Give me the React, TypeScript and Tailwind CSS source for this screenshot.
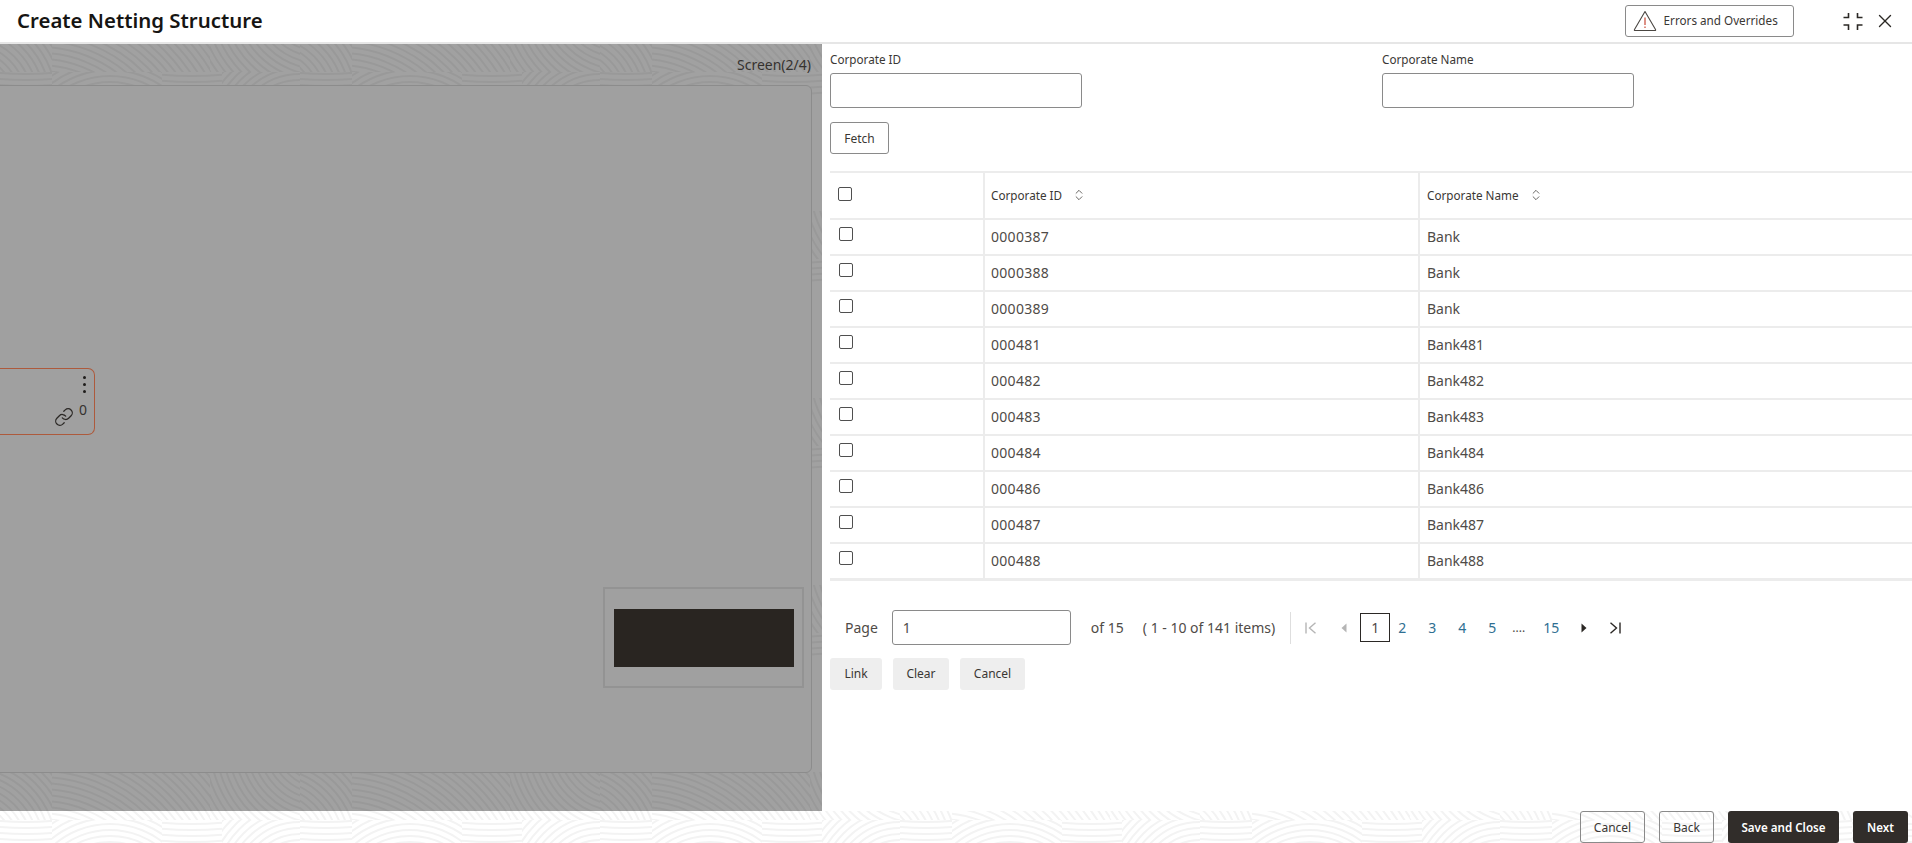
import React from 'react';
import { ChevronsUpDown, Link, X } from 'lucide-react';

const rows = [
    ['0000387', 'Bank'],
    ['0000388', 'Bank'],
    ['0000389', 'Bank'],
    ['000481', 'Bank481'],
    ['000482', 'Bank482'],
    ['000483', 'Bank483'],
    ['000484', 'Bank484'],
    ['000486', 'Bank486'],
    ['000487', 'Bank487'],
    ['000488', 'Bank488'],
];

// Patches of the background tile: x, y, width, height, arc centre x, arc centre y
const patches = [
    [0, 139, 52, 48, -30, 215],
    [52, 139, 158, 48, 40, 290],
    [210, 139, 90, 48, 320, 110],
    [0, 0, 52, 24, 26, -300],
    [52, 0, 110, 24, 110, 90],
    [162, 0, 60, 24, 192, -340],
    [222, 0, 78, 24, 300, 70],
];

const radii = Array.from({ length: 70 }, (_, i) => 8 + i * 6);

// Fingerprint-like pattern behind the page
const SwirlBackground = () => (
    <svg className="absolute inset-0 h-full w-full" aria-hidden="true">
        <defs>
            <pattern id="swirl" width="300" height="187" patternUnits="userSpaceOnUse" y="72">
                {patches.map(([x, y, w, h, cx, cy], i) => (
                    <svg key={i} x={x} y={y} width={w} height={h} viewBox={`${x} ${y} ${w} ${h}`}>
                        {radii.map((r) => (
                            <circle key={r} cx={cx} cy={cy} r={r} fill="none" stroke="#f3f3f3" strokeWidth="2" />
                        ))}
                    </svg>
                ))}
            </pattern>
        </defs>
        <rect width="100%" height="100%" fill="url(#swirl)" />
    </svg>
);

const Checkbox = () => (
    <input type="checkbox" className="block h-[14px] w-[14px] appearance-none rounded-[2px] border border-[#4f4f4f] bg-white" />
);

const WarningIcon = () => (
    <svg width="24" height="22" viewBox="0 0 24 22" fill="none">
        <path d="M12 1.5 L22.5 19.5 Q23 20.5 22 20.5 H2 Q1 20.5 1.5 19.5 Z" stroke="#4a4642" strokeWidth="1.1" strokeLinejoin="round" />
        <path d="M12 7.5 V15" stroke="#c74634" strokeWidth="1.2" />
        <path d="M12 16.6 V18" stroke="#c74634" strokeWidth="1.2" />
    </svg>
);

const CollapseIcon = () => (
    <svg width="20" height="20" viewBox="0 0 20 20" fill="none" stroke="#2b2825" strokeWidth="1.6">
        <path d="M0.5 6.5 H5.5 V2" />
        <path d="M19.5 6.5 H14.5 V2" />
        <path d="M0.5 14 H5.5 V19" />
        <path d="M19.5 14 H14.5 V19" />
    </svg>
);

const FirstIcon = () => (
    <svg width="12" height="12" viewBox="0 0 12 12" fill="none" stroke="#b5b5b5" strokeWidth="1.4">
        <path d="M1 0.5 V11.5" />
        <path d="M10.5 0.8 L4.5 6 L10.5 11.2" />
    </svg>
);

const LastIcon = () => (
    <svg width="12" height="12" viewBox="0 0 12 12" fill="none" stroke="#2b2825" strokeWidth="1.4">
        <path d="M11 0.5 V11.5" />
        <path d="M1.5 0.8 L7.5 6 L1.5 11.2" />
    </svg>
);

const PrevIcon = () => (
    <svg width="6" height="10" viewBox="0 0 6 10">
        <path d="M5.5 0.5 V9.5 L0.5 5 Z" fill="#b5b5b5" />
    </svg>
);

const NextIcon = () => (
    <svg width="6" height="10" viewBox="0 0 6 10">
        <path d="M0.5 0.5 V9.5 L5.5 5 Z" fill="#2b2825" />
    </svg>
);

const PageLink = ({ label, className }: { label: string; className: string }) => (
    <span className={`text-[14px] leading-none text-[#2f6f92] ${className}`}>{label}</span>
);

const App: React.FC = () => {
    return (
        <div className="relative flex h-[843px] w-[1912px] flex-col overflow-hidden bg-white font-['Noto_Sans',sans-serif] text-[#3a3734]">
            <SwirlBackground />

            {/* Title bar */}
            <header className="relative flex h-[44px] shrink-0 items-center border-b-2 border-[#e6e6e6] bg-white pl-[17px]">
                <h1 className="pb-[2px] text-[20.4px] font-semibold leading-none text-[#161513]">Create Netting Structure</h1>
                <button className="ml-[1362px] flex h-[32px] w-[169px] items-center rounded-[3px] border border-[#8a8a8a] pl-[7px] text-[11.7px] text-[#3a3734]">
                    <WarningIcon />
                    <span className="ml-[7px]">Errors and Overrides</span>
                </button>
                <span className="ml-[49px]"><CollapseIcon /></span>
                <X className="ml-[11px]" size={22} strokeWidth={1.5} color="#2b2825" />
            </header>

            <div className="relative flex h-[767px] shrink-0">
                {/* Dimmed diagram */}
                <div className="relative flex w-[822px] shrink-0 flex-col bg-black/[.37]">
                    <div className="flex h-[41px] shrink-0 items-center justify-end pr-[11px] text-[14px] text-[#35322f]">Screen(2/4)</div>
                    <div className="relative ml-[-10px] mr-[10px] h-[688px] rounded-[6px] border border-[#8c8c8c] bg-[#a0a0a0]">
                        <div className="absolute left-[-1px] top-[282px] h-[67px] w-[105px] rounded-r-[7px] border border-l-0 border-[#ad5a3c]">
                            <div className="absolute right-[8px] top-[7px] flex flex-col gap-[4px]">
                                <span className="h-[3px] w-[3px] rounded-full bg-[#1f1d1b]" />
                                <span className="h-[3px] w-[3px] rounded-full bg-[#1f1d1b]" />
                                <span className="h-[3px] w-[3px] rounded-full bg-[#1f1d1b]" />
                            </div>
                            <span className="absolute left-[89px] top-[34px] text-[14px] leading-none text-[#35322f]">0</span>
                            <Link className="absolute left-[64px] top-[38px]" size={20} strokeWidth={1.5} color="#2b2825" />
                        </div>
                        {/* Minimap */}
                        <div className="absolute right-[7px] top-[501px] h-[101px] w-[201px] border-2 border-[#939393]">
                            <div className="ml-[9px] mt-[20px] h-[58px] w-[180px] bg-[#292521]" />
                        </div>
                    </div>
                </div>

                {/* Lookup panel */}
                <div className="w-[1090px] shrink-0 bg-white pl-[8px] pt-[7px]">
                    <div className="flex">
                        <div className="w-[552px]">
                            <label className="block text-[11.7px] leading-[16px]">Corporate ID</label>
                            <input className="mt-[6px] block h-[35px] w-[252px] rounded-[3px] border border-[#8a8a8a] bg-white" />
                        </div>
                        <div>
                            <label className="block text-[11.7px] leading-[16px]">Corporate Name</label>
                            <input className="mt-[6px] block h-[35px] w-[252px] rounded-[3px] border border-[#8a8a8a] bg-white" />
                        </div>
                    </div>
                    <button className="mt-[14px] block h-[32px] w-[59px] rounded-[3px] border border-[#8a8a8a] pt-[1px] text-[12px]">Fetch</button>

                    <table className="mt-[17px] w-[1082px] table-fixed border-collapse">
                        <colgroup>
                            <col className="w-[154px]" />
                            <col className="w-[435px]" />
                            <col />
                        </colgroup>
                        <thead>
                            <tr className="h-[47px] border-y-2 border-[#ececec]">
                                <th className="border-r-2 border-[#ececec] pb-[4px] pl-[8px] text-left font-normal"><Checkbox /></th>
                                <th className="border-r-2 border-[#ececec] pl-[6px] text-left text-[11.7px] font-normal">
                                    <span className="flex items-center">Corporate ID<ChevronsUpDown className="ml-[10px]" size={14} strokeWidth={1.3} /></span>
                                </th>
                                <th className="pl-[7px] text-left text-[11.7px] font-normal">
                                    <span className="flex items-center">Corporate Name<ChevronsUpDown className="ml-[10px]" size={14} strokeWidth={1.3} /></span>
                                </th>
                            </tr>
                        </thead>
                        <tbody>
                            {rows.map(([id, name]) => (
                                <tr key={id} className="h-[36px] border-b-2 border-[#ececec] last:border-b-[3px]">
                                    <td className="border-r-2 border-[#ececec] pb-[6px] pl-[9px]"><Checkbox /></td>
                                    <td className="border-r-2 border-[#ececec] pl-[6px] text-[14px] leading-none tracking-[0.3px] text-[#4f4b47]">{id}</td>
                                    <td className="pl-[7px] text-[14px] leading-none text-[#4f4b47]">{name}</td>
                                </tr>
                            ))}
                        </tbody>
                    </table>

                    {/* Pagination */}
                    <div className="mt-[29px] flex h-[36px] items-center text-[14px] text-[#4f4b47]">
                        <span className="ml-[15px]">Page</span>
                        <div className="ml-[14px] flex h-[35px] w-[179px] items-center rounded-[3px] border border-[#8a8a8a] pl-[10px]">1</div>
                        <span className="ml-[20px]">of 15</span>
                        <span className="ml-[19px]">( 1 - 10 of 141 items)</span>
                        <span className="ml-[15px] h-[32px] w-px bg-[#dedede]" />
                        <span className="ml-[14px]"><FirstIcon /></span>
                        <span className="ml-[24px]"><PrevIcon /></span>
                        <span className="ml-[13px] flex h-[29px] w-[30px] items-center justify-center border border-[#2b2825]">1</span>
                        <PageLink label="2" className="ml-[8px]" />
                        <PageLink label="3" className="ml-[22px]" />
                        <PageLink label="4" className="ml-[22px]" />
                        <PageLink label="5" className="ml-[22px]" />
                        <span className="ml-[16px] text-[12px]">....</span>
                        <PageLink label="15" className="ml-[18px]" />
                        <span className="ml-[22px]"><NextIcon /></span>
                        <span className="ml-[22px]"><LastIcon /></span>
                    </div>
                    <div className="mt-[12px] flex gap-[11px] text-[12px]">
                        <button className="h-[32px] w-[52px] rounded-[3px] bg-[#eeeeee]">Link</button>
                        <button className="h-[32px] w-[56px] rounded-[3px] bg-[#eeeeee]">Clear</button>
                        <button className="h-[32px] w-[65px] rounded-[3px] bg-[#eeeeee]">Cancel</button>
                    </div>
                </div>
            </div>

            {/* Footer actions */}
            <footer className="relative flex h-[32px] shrink-0 justify-end gap-[14px] pr-[4px] text-[12px]">
                <button className="h-[32px] w-[65px] rounded-[3px] border border-[#8a8a8a] pt-[1px]">Cancel</button>
                <button className="h-[32px] w-[55px] rounded-[3px] border border-[#8a8a8a] pt-[1px]">Back</button>
                <button className="h-[32px] w-[111px] rounded-[3px] bg-[#312d2a] pt-[1px] text-[11.6px] font-semibold text-white">Save and Close</button>
                <button className="h-[32px] w-[55px] rounded-[3px] bg-[#312d2a] pt-[1px] text-[11.6px] font-semibold text-white">Next</button>
            </footer>
        </div>
    );
};

export default App;
